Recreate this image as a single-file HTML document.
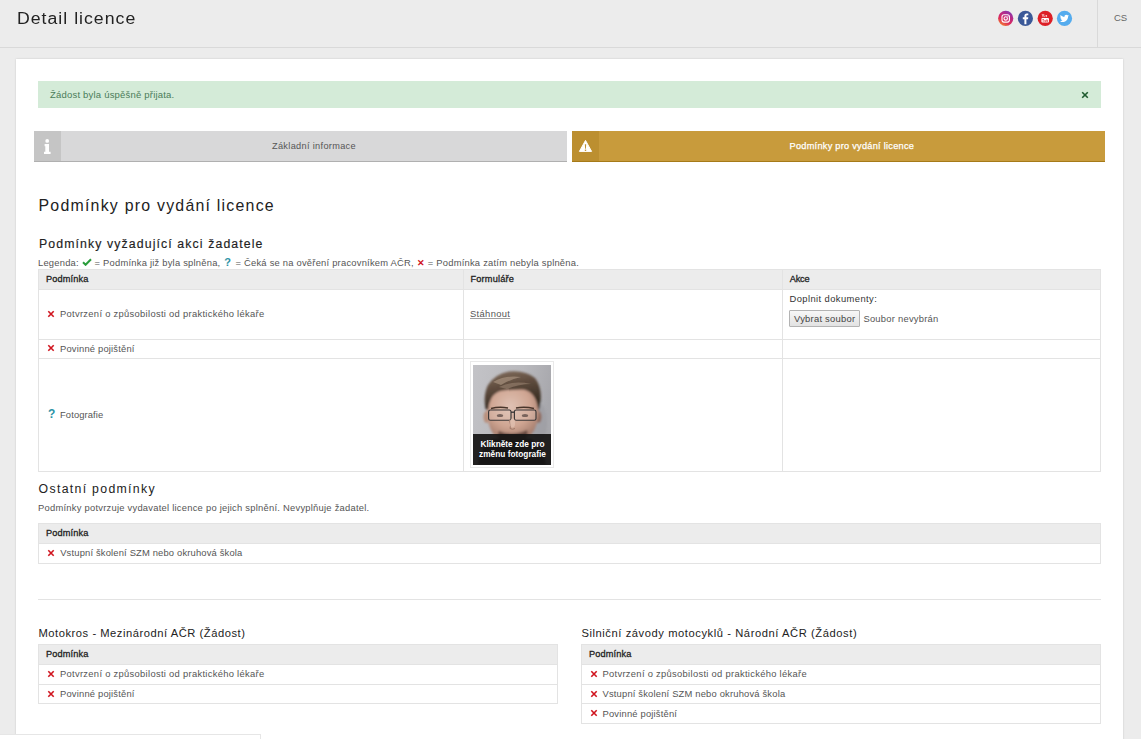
<!DOCTYPE html>
<html><head><meta charset="utf-8">
<style>
*{margin:0;padding:0;box-sizing:border-box}
html,body{width:1141px;height:739px;overflow:hidden;background:#ececec;font-family:"Liberation Sans",sans-serif;color:#333}
.a{position:absolute;white-space:nowrap}
</style></head><body>
<div class="a" style="left:0px;top:0px;width:1141px;height:47px;background:#ececec"></div>
<div class="a" style="left:0px;top:47px;width:1141px;height:1px;background:#d9d9d9"></div>
<div class="a" style="left:1097px;top:0px;width:1px;height:47px;background:#d9d9d9"></div>
<div class="a" style="left:16.5px;top:10.53px;font-size:15.8px;line-height:15.8px;color:#222;font-weight:normal;letter-spacing:0.893px;transform:scaleX(1.12);transform-origin:0 0;">Detail licence</div>
<svg class="a" style="left:997px;top:10px" width="77" height="17" viewBox="0 0 77 17">
<defs><linearGradient id="ig" x1="0.2" y1="1" x2="0.8" y2="0"><stop offset="0" stop-color="#f58a2c"/><stop offset="0.35" stop-color="#dd2a5b"/><stop offset="0.7" stop-color="#b52a8a"/><stop offset="1" stop-color="#7a3bb5"/></linearGradient></defs>
<circle cx="8.7" cy="8.4" r="7.6" fill="url(#ig)"/>
<rect x="5" y="4.7" width="7.4" height="7.4" rx="2" fill="none" stroke="#fff" stroke-width="1.1"/>
<circle cx="8.7" cy="8.4" r="1.7" fill="none" stroke="#fff" stroke-width="1.1"/>
<circle cx="10.9" cy="6.3" r="0.5" fill="#fff"/>
<circle cx="28.4" cy="8.4" r="7.6" fill="#3b5998"/>
<path d="M29.4 14.2v-5h1.6l0.3-1.9h-1.9v-1.2c0-0.6 0.2-0.9 0.9-0.9h1v-1.7c-0.2 0-0.8-0.1-1.5-0.1c-1.5 0-2.4 0.9-2.4 2.5v1.4h-1.6v1.9h1.6v5z" fill="#fff"/>
<circle cx="48.2" cy="8.4" r="7.6" fill="#dd1f26"/>
<rect x="44.4" y="8" width="7.6" height="4.6" rx="1" fill="#fff"/>
<path d="M45 4l1 1.8v1.4M47 4l-1 1.8M47.8 5.6v1.5M49.6 5.6v1.5M48.6 5.6h1.4" stroke="#fff" stroke-width="0.7" fill="none"/>
<path d="M45.4 9.5h1.6M46.2 9.5v2.5M47.8 10v1.6h1v-1.6M49.8 9.2v2.4h0.9v-1.4h-0.9" stroke="#dd1f26" stroke-width="0.6" fill="none"/>
<circle cx="67.5" cy="8.4" r="7.6" fill="#55acee"/>
<path d="M72 5.6c-0.3 0.15-0.7 0.25-1.05 0.3c0.4-0.25 0.65-0.6 0.8-1c-0.35 0.2-0.75 0.35-1.15 0.45c-0.35-0.35-0.85-0.6-1.35-0.6c-1 0-1.85 0.85-1.85 1.85c0 0.15 0 0.3 0.05 0.4c-1.55-0.1-2.9-0.8-3.85-1.9c-0.15 0.3-0.25 0.6-0.25 0.95c0 0.65 0.3 1.2 0.8 1.55c-0.3 0-0.6-0.1-0.85-0.25c0 0.9 0.65 1.65 1.5 1.8c-0.15 0.05-0.3 0.05-0.5 0.05c-0.1 0-0.25 0-0.35-0.05c0.25 0.75 0.9 1.25 1.75 1.3c-0.65 0.5-1.45 0.8-2.3 0.8c-0.15 0-0.3 0-0.45-0.05c0.8 0.55 1.8 0.85 2.85 0.85c3.4 0 5.25-2.8 5.25-5.25v-0.25c0.35-0.25 0.65-0.6 0.9-0.95z" fill="#fff"/>
</svg>
<div class="a" style="left:1114px;top:13.06px;font-size:9.5px;line-height:9.5px;color:#666;font-weight:normal;letter-spacing:0.000px;">CS</div>
<div class="a" style="left:16px;top:59px;width:1107px;height:700px;background:#fff;box-shadow:0 0 2px rgba(0,0,0,.15)"></div>
<div class="a" style="left:38px;top:81px;width:1063px;height:27px;background:#d4ebd8"></div>
<div class="a" style="left:50px;top:89.86px;font-size:9.5px;line-height:9.5px;color:#4a7c58;font-weight:normal;letter-spacing:0.200px;">Žádost byla úspěšně přijata.</div>
<svg class="a" style="left:1080px;top:90px" width="10" height="10" viewBox="0 0 10 10"><path d="M2.2 2.2L7.8 7.8M7.8 2.2L2.2 7.8" stroke="#1e5a2e" stroke-width="1.6" stroke-linecap="butt"/></svg>
<div class="a" style="left:34px;top:131px;width:532.6px;height:30px;background:#d8d8d9"></div>
<div class="a" style="left:34px;top:131px;width:27px;height:30px;background:#c5c5c5"></div>
<div class="a" style="left:34px;top:161px;width:533px;height:1px;background:#b0b0b0"></div>
<svg class="a" style="left:34px;top:131px" width="27" height="30" viewBox="0 0 27 30"><circle cx="13.2" cy="9.9" r="1.9" fill="#fff"/><path d="M10.6 13h4.4v7.8h1.6v2.2h-6.6v-2.2h1.3v-5.6h-0.7z" fill="#fff"/></svg>
<div class="a" style="left:272px;top:141.91px;font-size:9.2px;line-height:9.2px;color:#555;font-weight:normal;letter-spacing:0.324px;">Základní informace</div>
<div class="a" style="left:572px;top:131px;width:533px;height:30px;background:#c89b3c"></div>
<div class="a" style="left:572px;top:131px;width:27px;height:30px;background:#bc8f30"></div>
<div class="a" style="left:572px;top:161px;width:533px;height:1px;background:#a67a18"></div>
<svg class="a" style="left:572px;top:131px" width="27" height="29" viewBox="0 0 27 29"><path d="M13.5 9.4L19.6 20.4H7.4z" fill="#fff" stroke="#fff" stroke-width="1" stroke-linejoin="round"/><path d="M12.8 13.2h1.4l-0.3 4.6h-0.8z" fill="#bc8f30"/><rect x="12.8" y="18.6" width="1.4" height="1.3" fill="#bc8f30"/></svg>
<div class="a" style="left:789.5px;top:141.91px;font-size:9.2px;line-height:9.2px;color:#fff;font-weight:normal;letter-spacing:0.269px;-webkit-text-stroke:0.25px #fff">Podmínky pro vydání licence</div>
<div class="a" style="left:38.5px;top:197.54px;font-size:15.9px;line-height:15.9px;color:#222;font-weight:normal;letter-spacing:1.231px;">Podmínky pro vydání licence</div>
<div class="a" style="left:39px;top:237.59px;font-size:12.3px;line-height:12.3px;color:#222;font-weight:normal;letter-spacing:1.109px;-webkit-text-stroke:0.15px #222">Podmínky vyžadující akci žadatele</div>
<div class="a" style="left:38px;top:257.84px;font-size:9.4px;line-height:9.4px;color:#555;font-weight:normal;letter-spacing:0.223px;">Legenda: <svg width="10" height="8" viewBox="0 0 10 8" style="vertical-align:0px"><path d="M1 4.2L3.6 6.8L9 1.2" stroke="#2a9d3c" stroke-width="2" fill="none"/></svg> = Podmínka již byla splněna, <span style="color:#2d93a6;font-weight:bold;font-size:11px;margin:0 1.5px 0 1px">?</span> = Čeká se na ověření pracovníkem AČR, <span style="color:#d0141e;font-weight:bold">✕</span> = Podmínka zatím nebyla splněna.</div>
<div class="a" style="left:38px;top:269px;width:1062px;height:20px;background:#ececec"></div>
<div class="a" style="left:38px;top:269px;width:1063px;height:1px;background:#e3e3e3"></div>
<div class="a" style="left:38px;top:289px;width:1063px;height:1px;background:#e3e3e3"></div>
<div class="a" style="left:38px;top:339px;width:1063px;height:1px;background:#e3e3e3"></div>
<div class="a" style="left:38px;top:358px;width:1063px;height:1px;background:#e3e3e3"></div>
<div class="a" style="left:38px;top:471px;width:1063px;height:1px;background:#e3e3e3"></div>
<div class="a" style="left:38px;top:269px;width:1px;height:203px;background:#e3e3e3"></div>
<div class="a" style="left:1100px;top:269px;width:1px;height:203px;background:#e3e3e3"></div>
<div class="a" style="left:463px;top:269px;width:1px;height:203px;background:#e3e3e3"></div>
<div class="a" style="left:782px;top:269px;width:1px;height:203px;background:#e3e3e3"></div>
<div class="a" style="left:46px;top:275.21px;font-size:9.2px;line-height:9.2px;color:#222;font-weight:normal;letter-spacing:0.143px;-webkit-text-stroke:0.3px #222">Podmínka</div>
<div class="a" style="left:470.4px;top:275.21px;font-size:9.2px;line-height:9.2px;color:#222;font-weight:normal;letter-spacing:0.213px;-webkit-text-stroke:0.3px #222">Formuláře</div>
<div class="a" style="left:789.7px;top:275.21px;font-size:9.2px;line-height:9.2px;color:#222;font-weight:normal;letter-spacing:-0.167px;-webkit-text-stroke:0.3px #222">Akce</div>
<svg class="a" style="left:46.2px;top:308.7px" width="10" height="10" viewBox="0 0 10 10"><path d="M2.3 2.3L7.7 7.7M7.7 2.3L2.3 7.7" stroke="#d0141e" stroke-width="1.6" stroke-linecap="butt"/></svg>
<div class="a" style="left:60px;top:308.74px;font-size:9.4px;line-height:9.4px;color:#555;font-weight:normal;letter-spacing:0.298px;">Potvrzení o způsobilosti od praktického lékaře</div>
<div class="a" style="left:470px;top:308.94px;font-size:9.4px;line-height:9.4px;color:#555;font-weight:normal;letter-spacing:0.343px;text-decoration:underline;text-decoration-color:#a0a0a0">Stáhnout</div>
<div class="a" style="left:789.5px;top:294.04px;font-size:9.4px;line-height:9.4px;color:#333;font-weight:normal;letter-spacing:0.412px;">Doplnit dokumenty:</div>
<div class="a" style="left:789px;top:310px;width:71px;height:17px;border:1px solid #b3b3b3;border-radius:1px;background:linear-gradient(#f7f7f7,#e2e2e2)"></div>
<div class="a" style="left:794px;top:314.34px;font-size:9.4px;line-height:9.4px;color:#444;font-weight:normal;letter-spacing:0.250px;">Vybrat soubor</div>
<div class="a" style="left:863.4px;top:314.34px;font-size:9.4px;line-height:9.4px;color:#555;font-weight:normal;letter-spacing:0.250px;">Soubor nevybrán</div>
<svg class="a" style="left:46.2px;top:343.4px" width="10" height="10" viewBox="0 0 10 10"><path d="M2.3 2.3L7.7 7.7M7.7 2.3L2.3 7.7" stroke="#d0141e" stroke-width="1.6" stroke-linecap="butt"/></svg>
<div class="a" style="left:60px;top:343.54px;font-size:9.4px;line-height:9.4px;color:#555;font-weight:normal;letter-spacing:0.188px;">Povinné pojištění</div>
<div class="a" style="left:48px;top:408.24px;font-size:12px;line-height:12px;color:#2d93a6;font-weight:bold;letter-spacing:0.000px;">?</div>
<div class="a" style="left:60px;top:409.54px;font-size:9.4px;line-height:9.4px;color:#555;font-weight:normal;letter-spacing:0.111px;">Fotografie</div>
<div class="a" style="left:470px;top:361px;width:84px;height:107px;border:1px solid #e9e9e9;background:#fff"></div>
<svg class="a" style="left:473px;top:365px" width="78" height="100" viewBox="0 0 78 100">
<defs><linearGradient id="pbg" x1="0" y1="0" x2="1" y2="0.3"><stop offset="0" stop-color="#c3c3c7"/><stop offset="0.6" stop-color="#b9b9bd"/><stop offset="1" stop-color="#a7a7ac"/></linearGradient>
<radialGradient id="psk" cx="0.45" cy="0.35" r="0.7"><stop offset="0" stop-color="#e0c2b4"/><stop offset="0.55" stop-color="#cfa592"/><stop offset="1" stop-color="#9b7466"/></radialGradient>
<linearGradient id="phr" x1="0" y1="0" x2="0.3" y2="1"><stop offset="0" stop-color="#857060"/><stop offset="0.45" stop-color="#5e4b3d"/><stop offset="1" stop-color="#33291f"/></linearGradient>
<filter id="pbl" x="-10%" y="-10%" width="120%" height="120%"><feGaussianBlur stdDeviation="1"/></filter>
<filter id="pbl2" x="-10%" y="-10%" width="120%" height="120%"><feGaussianBlur stdDeviation="0.4"/></filter></defs>
<rect width="78" height="100" fill="url(#pbg)"/>
<g filter="url(#pbl)">
<ellipse cx="66" cy="58" rx="8" ry="20" fill="#9d9da2" opacity="0.7"/>
<path d="M5 100 Q8 80 20 74 L58 74 Q70 80 73 100z" fill="#262020"/>
<ellipse cx="13.5" cy="52" rx="3" ry="6" fill="#b88f7c"/>
<ellipse cx="65.5" cy="52" rx="3" ry="6" fill="#8f6a5c"/>
<path d="M14 40 Q14 26 26 24 Q40 22 54 24 Q66 27 66 42 Q66 60 58 70 Q50 76 39 76 Q28 76 21 70 Q13 60 14 40z" fill="url(#psk)"/>
<path d="M26 66 Q39 72 54 65 Q56 72 50 76 L28 76 Q23 72 26 66z" fill="#5a4038" opacity="0.85"/>
<path d="M12.5 44 Q10 30 15 20 Q22 9 36 6.5 Q52 5 62 13 Q69 22 67.5 36 Q67 42 65.5 46 Q64 34 59 29 Q54 24 48 24.5 Q36 25 30 25.5 Q21 27 18 34 Q15.5 39 15 45z" fill="url(#phr)"/>
</g>
<g filter="url(#pbl2)">
<path d="M20 17 Q32 10 48 12 Q38 14 28 20z" fill="#a38e7a" opacity="0.75"/>
<path d="M26 22 Q40 15 58 19 Q46 19 34 24z" fill="#9a8470" opacity="0.6"/>
<path d="M18 43.5 Q26 41.5 35 43" stroke="#4a362c" stroke-width="1.5" fill="none"/>
<path d="M43 43 Q52 41.5 61 43.5" stroke="#4a362c" stroke-width="1.5" fill="none"/>
<rect x="15.6" y="45" width="22.4" height="10.2" rx="1.8" fill="#e8d4ca" fill-opacity="0.25" stroke="#3a3737" stroke-width="1.15"/>
<rect x="41.4" y="45" width="21.6" height="10.2" rx="1.8" fill="#e8d4ca" fill-opacity="0.25" stroke="#3a3737" stroke-width="1.15"/>
<path d="M38 47.2h3.4" stroke="#353233" stroke-width="1.3"/>
<ellipse cx="27" cy="50.5" rx="3.2" ry="1.6" fill="#5a4a44" opacity="0.75"/><ellipse cx="52" cy="50.5" rx="3.2" ry="1.6" fill="#5a4a44" opacity="0.75"/>
<path d="M36.5 55 Q38.5 61 37 63.5 Q39.5 65 42 63.5" stroke="#9e7868" stroke-width="1" fill="none"/>
<ellipse cx="39.5" cy="58" rx="2.6" ry="4.5" fill="#e4c6b8" opacity="0.6"/>
</g>
<rect x="0" y="69" width="78" height="31" fill="#161414" fill-opacity="0.93"/>
<text x="39.5" y="81.5" text-anchor="middle" font-family="Liberation Sans" font-weight="bold" font-size="8.3" fill="#fff">Klikněte zde pro</text>
<text x="39.5" y="92.2" text-anchor="middle" font-family="Liberation Sans" font-weight="bold" font-size="8.3" fill="#fff">změnu fotografie</text>
</svg>
<div class="a" style="left:38.6px;top:482.69px;font-size:12.3px;line-height:12.3px;color:#222;font-weight:normal;letter-spacing:1.307px;">Ostatní podmínky</div>
<div class="a" style="left:38px;top:503.24px;font-size:9.4px;line-height:9.4px;color:#555;font-weight:normal;letter-spacing:0.243px;">Podmínky potvrzuje vydavatel licence po jejich splnění. Nevyplňuje žadatel.</div>
<div class="a" style="left:38px;top:523px;width:1062px;height:20px;background:#ececec"></div>
<div class="a" style="left:38px;top:523px;width:1063px;height:1px;background:#e3e3e3"></div>
<div class="a" style="left:38px;top:543px;width:1063px;height:1px;background:#e3e3e3"></div>
<div class="a" style="left:38px;top:563px;width:1063px;height:1px;background:#e3e3e3"></div>
<div class="a" style="left:38px;top:523px;width:1px;height:41px;background:#e3e3e3"></div>
<div class="a" style="left:1100px;top:523px;width:1px;height:41px;background:#e3e3e3"></div>
<div class="a" style="left:46px;top:529.01px;font-size:9.2px;line-height:9.2px;color:#222;font-weight:normal;letter-spacing:0.143px;-webkit-text-stroke:0.3px #222">Podmínka</div>
<svg class="a" style="left:46.2px;top:548px" width="10" height="10" viewBox="0 0 10 10"><path d="M2.3 2.3L7.7 7.7M7.7 2.3L2.3 7.7" stroke="#d0141e" stroke-width="1.6" stroke-linecap="butt"/></svg>
<div class="a" style="left:60.2px;top:548.24px;font-size:9.4px;line-height:9.4px;color:#555;font-weight:normal;letter-spacing:0.171px;">Vstupní školení SZM nebo okruhová škola</div>
<div class="a" style="left:38px;top:599px;width:1063px;height:1px;background:#e3e3e3"></div>
<div class="a" style="left:38.5px;top:628.02px;font-size:11.2px;line-height:11.2px;color:#222;font-weight:normal;letter-spacing:0.529px;">Motokros - Mezinárodní AČR (Žádost)</div>
<div class="a" style="left:38px;top:644px;width:519px;height:20px;background:#ececec"></div>
<div class="a" style="left:38px;top:644px;width:520px;height:1px;background:#e3e3e3"></div>
<div class="a" style="left:38px;top:664px;width:520px;height:1px;background:#e3e3e3"></div>
<div class="a" style="left:38px;top:684px;width:520px;height:1px;background:#e3e3e3"></div>
<div class="a" style="left:38px;top:703px;width:520px;height:1px;background:#e3e3e3"></div>
<div class="a" style="left:38px;top:644px;width:1px;height:60px;background:#e3e3e3"></div>
<div class="a" style="left:557px;top:644px;width:1px;height:60px;background:#e3e3e3"></div>
<div class="a" style="left:46px;top:650.01px;font-size:9.2px;line-height:9.2px;color:#222;font-weight:normal;letter-spacing:0.143px;-webkit-text-stroke:0.3px #222">Podmínka</div>
<svg class="a" style="left:46.2px;top:668.8px" width="10" height="10" viewBox="0 0 10 10"><path d="M2.3 2.3L7.7 7.7M7.7 2.3L2.3 7.7" stroke="#d0141e" stroke-width="1.6" stroke-linecap="butt"/></svg>
<div class="a" style="left:60px;top:669.44px;font-size:9.4px;line-height:9.4px;color:#555;font-weight:normal;letter-spacing:0.298px;">Potvrzení o způsobilosti od praktického lékaře</div>
<svg class="a" style="left:46.2px;top:688.5px" width="10" height="10" viewBox="0 0 10 10"><path d="M2.3 2.3L7.7 7.7M7.7 2.3L2.3 7.7" stroke="#d0141e" stroke-width="1.6" stroke-linecap="butt"/></svg>
<div class="a" style="left:60px;top:689.04px;font-size:9.4px;line-height:9.4px;color:#555;font-weight:normal;letter-spacing:0.188px;">Povinné pojištění</div>
<div class="a" style="left:581.4px;top:628.02px;font-size:11.2px;line-height:11.2px;color:#222;font-weight:normal;letter-spacing:0.564px;">Silniční závody motocyklů - Národní AČR (Žádost)</div>
<div class="a" style="left:581px;top:644px;width:519px;height:20px;background:#ececec"></div>
<div class="a" style="left:581px;top:644px;width:520px;height:1px;background:#e3e3e3"></div>
<div class="a" style="left:581px;top:664px;width:520px;height:1px;background:#e3e3e3"></div>
<div class="a" style="left:581px;top:684px;width:520px;height:1px;background:#e3e3e3"></div>
<div class="a" style="left:581px;top:703px;width:520px;height:1px;background:#e3e3e3"></div>
<div class="a" style="left:581px;top:723px;width:520px;height:1px;background:#e3e3e3"></div>
<div class="a" style="left:581px;top:644px;width:1px;height:80px;background:#e3e3e3"></div>
<div class="a" style="left:1100px;top:644px;width:1px;height:80px;background:#e3e3e3"></div>
<div class="a" style="left:589px;top:650.01px;font-size:9.2px;line-height:9.2px;color:#222;font-weight:normal;letter-spacing:0.143px;-webkit-text-stroke:0.3px #222">Podmínka</div>
<svg class="a" style="left:589.2px;top:668.8px" width="10" height="10" viewBox="0 0 10 10"><path d="M2.3 2.3L7.7 7.7M7.7 2.3L2.3 7.7" stroke="#d0141e" stroke-width="1.6" stroke-linecap="butt"/></svg>
<div class="a" style="left:602.5px;top:669.44px;font-size:9.4px;line-height:9.4px;color:#555;font-weight:normal;letter-spacing:0.298px;">Potvrzení o způsobilosti od praktického lékaře</div>
<svg class="a" style="left:589.2px;top:688.5px" width="10" height="10" viewBox="0 0 10 10"><path d="M2.3 2.3L7.7 7.7M7.7 2.3L2.3 7.7" stroke="#d0141e" stroke-width="1.6" stroke-linecap="butt"/></svg>
<div class="a" style="left:602.5px;top:689.04px;font-size:9.4px;line-height:9.4px;color:#555;font-weight:normal;letter-spacing:0.184px;">Vstupní školení SZM nebo okruhová škola</div>
<svg class="a" style="left:589.2px;top:708.2px" width="10" height="10" viewBox="0 0 10 10"><path d="M2.3 2.3L7.7 7.7M7.7 2.3L2.3 7.7" stroke="#d0141e" stroke-width="1.6" stroke-linecap="butt"/></svg>
<div class="a" style="left:602.5px;top:708.64px;font-size:9.4px;line-height:9.4px;color:#555;font-weight:normal;letter-spacing:0.188px;">Povinné pojištění</div>
<div class="a" style="left:0px;top:734px;width:261px;height:10px;background:#fff;border-top:1px solid #e6e6e6;border-right:1px solid #e6e6e6"></div>
</body></html>
